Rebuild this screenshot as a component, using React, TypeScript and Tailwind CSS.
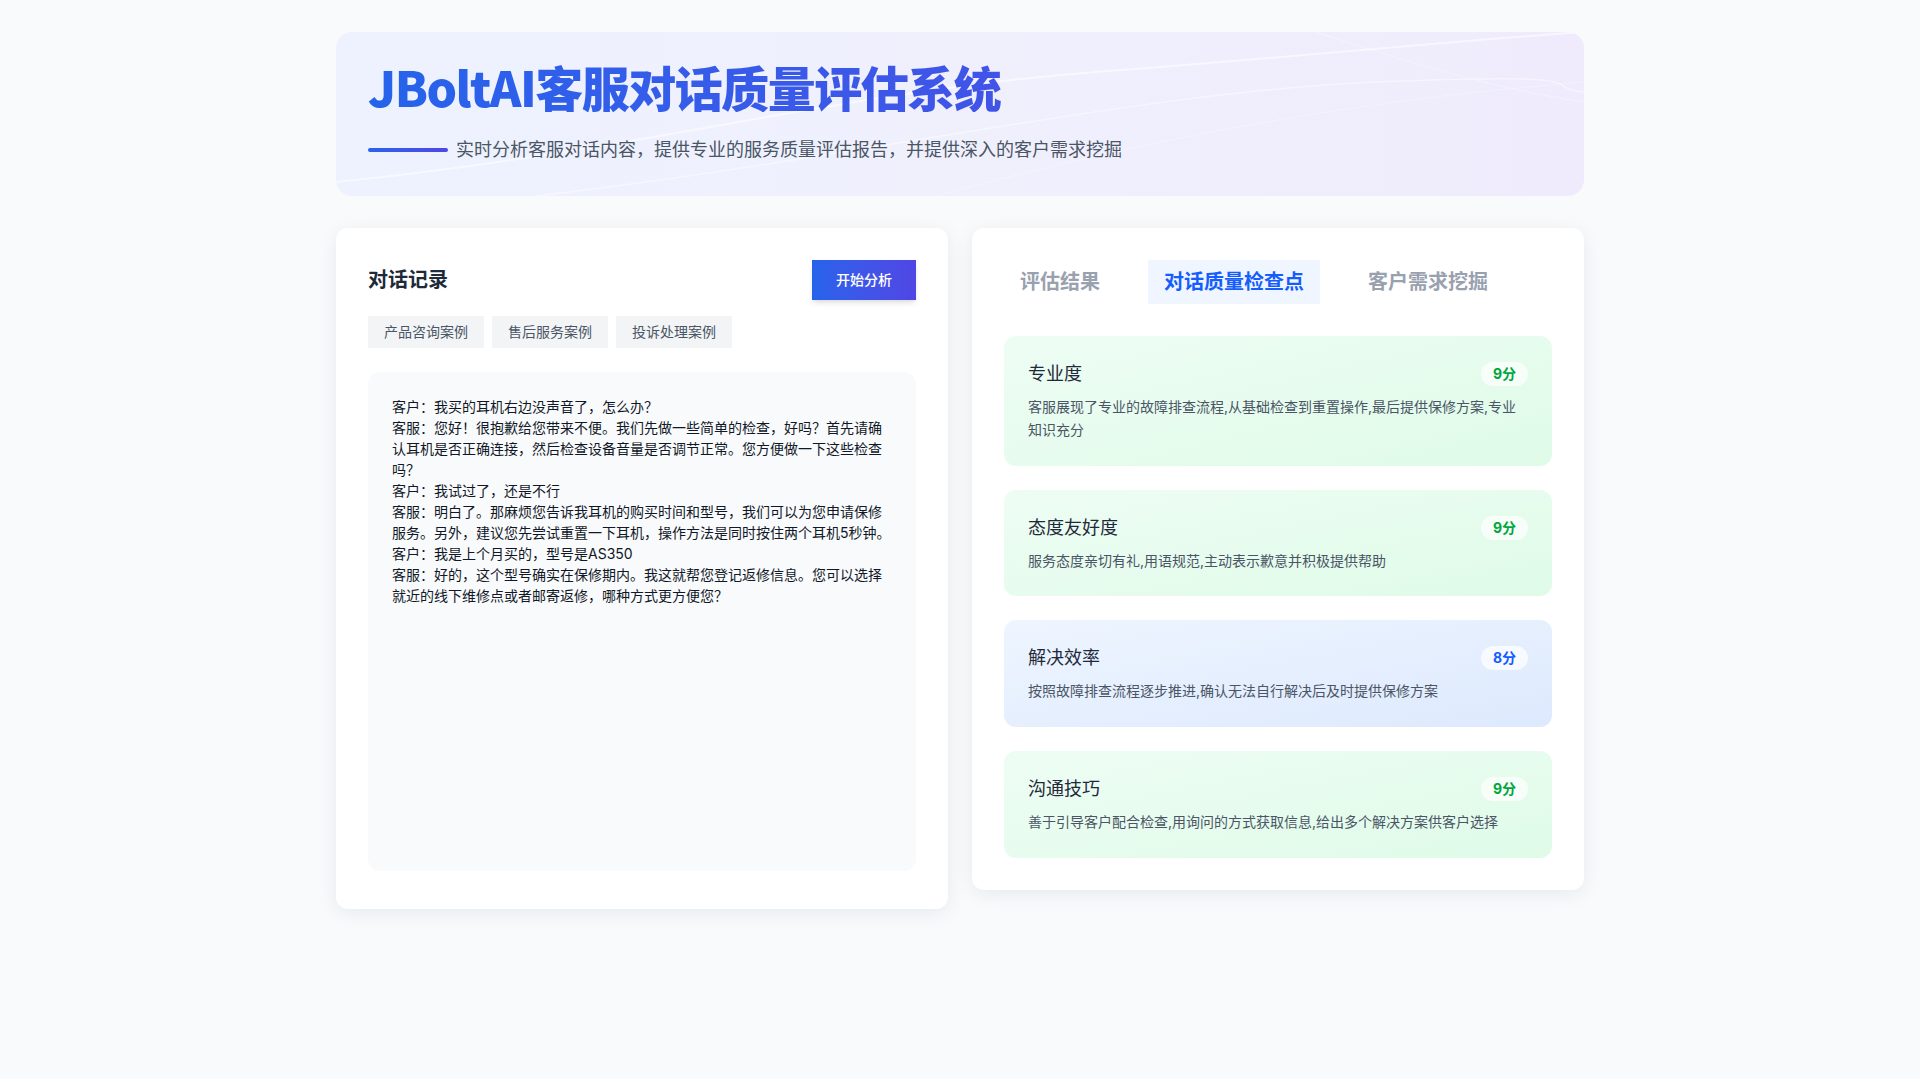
import { useState } from 'react';

const dialogue = `客户：我买的耳机右边没声音了，怎么办？
客服：您好！很抱歉给您带来不便。我们先做一些简单的检查，好吗？首先请确认耳机是否正确连接，然后检查设备音量是否调节正常。您方便做一下这些检查吗？
客户：我试过了，还是不行
客服：明白了。那麻烦您告诉我耳机的购买时间和型号，我们可以为您申请保修服务。另外，建议您先尝试重置一下耳机，操作方法是同时按住两个耳机5秒钟。
客户：我是上个月买的，型号是AS350
客服：好的，这个型号确实在保修期内。我这就帮您登记返修信息。您可以选择就近的线下维修点或者邮寄返修，哪种方式更方便您？`;

const samples = ['产品咨询案例', '售后服务案例', '投诉处理案例'];
const tabs = ['评估结果', '对话质量检查点', '客户需求挖掘'];

const checkpoints = [
  {
    name: '专业度',
    score: 9,
    desc: '客服展现了专业的故障排查流程,从基础检查到重置操作,最后提供保修方案,专业知识充分',
  },
  { name: '态度友好度', score: 9, desc: '服务态度亲切有礼,用语规范,主动表示歉意并积极提供帮助' },
  { name: '解决效率', score: 8, desc: '按照故障排查流程逐步推进,确认无法自行解决后及时提供保修方案' },
  { name: '沟通技巧', score: 9, desc: '善于引导客户配合检查,用询问的方式获取信息,给出多个解决方案供客户选择' },
];

function Header() {
  return (
    <header className="relative overflow-hidden rounded-2xl bg-gradient-to-r from-[#edf2fe] via-[#f0f0fd] to-[#efebfc] p-8">
      <svg
        className="pointer-events-none absolute inset-0 h-full w-full"
        viewBox="0 0 1248 164"
        preserveAspectRatio="none"
        fill="none"
      >
        <path d="M0 150 C 300 120, 500 60, 760 40 S 1100 10, 1248 0" stroke="white" strokeOpacity="0.55" strokeWidth="2" />
        <path d="M200 164 C 500 130, 800 60, 1040 50 S 1200 55, 1248 60" stroke="white" strokeOpacity="0.45" strokeWidth="1.5" />
        <path d="M600 164 C 800 110, 1000 70, 1248 50" stroke="white" strokeOpacity="0.3" strokeWidth="1" />
        <path d="M980 0 C 1100 40, 1180 60, 1248 70" stroke="white" strokeOpacity="0.35" strokeWidth="1" />
      </svg>
      <div className="relative">
        <h1
          className="-mt-0.5 bg-gradient-to-r from-[#2563eb] to-[#4f46e5] bg-clip-text pb-0.5 text-5xl leading-none font-black tracking-[-1.5px] text-transparent"
          style={{ fontFamily: '"Noto Sans CJK SC", sans-serif' }}
        >
          JBoltAI客服对话质量评估系统
        </h1>
        <div className="mt-6 flex items-center gap-2">
          <span className="h-1 w-20 rounded-full bg-gradient-to-r from-[#2563eb] to-[#4f46e5]" />
          <p className="text-lg text-gray-600">实时分析客服对话内容，提供专业的服务质量评估报告，并提供深入的客户需求挖掘</p>
        </div>
      </div>
    </header>
  );
}

function DialoguePanel() {
  return (
    <section className="rounded-xl bg-white p-8 pb-[38px] shadow-[0_4px_20px_rgba(15,23,42,0.07)]">
      <div className="flex items-center justify-between">
        <h2 className="text-xl font-bold text-gray-800">对话记录</h2>
        <button className="bg-gradient-to-r from-[#2563eb] to-[#4f46e5] px-6 py-2.5 text-sm font-medium text-white shadow-md">
          开始分析
        </button>
      </div>
      <div className="mt-4 flex gap-2">
        {samples.map((s) => (
          <button key={s} className="bg-gray-100 px-4 py-1.5 text-sm text-gray-600">
            {s}
          </button>
        ))}
      </div>
      <div className="mt-6 h-[499px] rounded-xl bg-gray-50 p-6 text-sm leading-[21px] whitespace-pre-wrap text-gray-900">
        {dialogue}
      </div>
    </section>
  );
}

function ResultPanel() {
  const [active, setActive] = useState(1);
  return (
    <section className="self-start rounded-xl bg-white p-8 shadow-[0_4px_20px_rgba(15,23,42,0.07)]">
      <div className="flex gap-8">
        {tabs.map((t, i) => (
          <button
            key={t}
            onClick={() => setActive(i)}
            className={
              i === active
                ? 'bg-blue-50 px-4 py-2 text-xl font-bold text-blue-600'
                : 'px-4 py-2 text-xl font-bold text-gray-400'
            }
          >
            {t}
          </button>
        ))}
      </div>
      <div className="mt-8 flex flex-col gap-6">
        {checkpoints.map((c) => {
          const good = c.score >= 9;
          return (
            <div
              key={c.name}
              className={
                good
                  ? 'rounded-xl bg-gradient-to-br from-[#eefdf4] to-[#dffbe8] p-6'
                  : 'rounded-xl bg-gradient-to-br from-[#eef5ff] to-[#dde9fd] p-6'
              }
            >
              <div className="flex items-center justify-between">
                <h3 className="text-lg text-gray-800">{c.name}</h3>
                <span
                  className={
                    good
                      ? 'rounded-full bg-white/70 px-3 py-0.5 text-sm font-bold text-green-600'
                      : 'rounded-full bg-white/70 px-3 py-0.5 text-sm font-bold text-blue-600'
                  }
                >
                  {c.score}分
                </span>
              </div>
              <p className="mt-2 text-sm leading-relaxed text-gray-600">{c.desc}</p>
            </div>
          );
        })}
      </div>
    </section>
  );
}

export default function App() {
  return (
    <div
      className="min-h-screen bg-[#f8fafc]"
      style={{ fontFamily: '"Inter", "Noto Sans CJK SC", sans-serif' }}
    >
      <div className="mx-auto max-w-7xl px-4 py-8">
        <Header />
        <div className="mt-8 grid grid-cols-2 gap-6">
          <DialoguePanel />
          <ResultPanel />
        </div>
      </div>
    </div>
  );
}
